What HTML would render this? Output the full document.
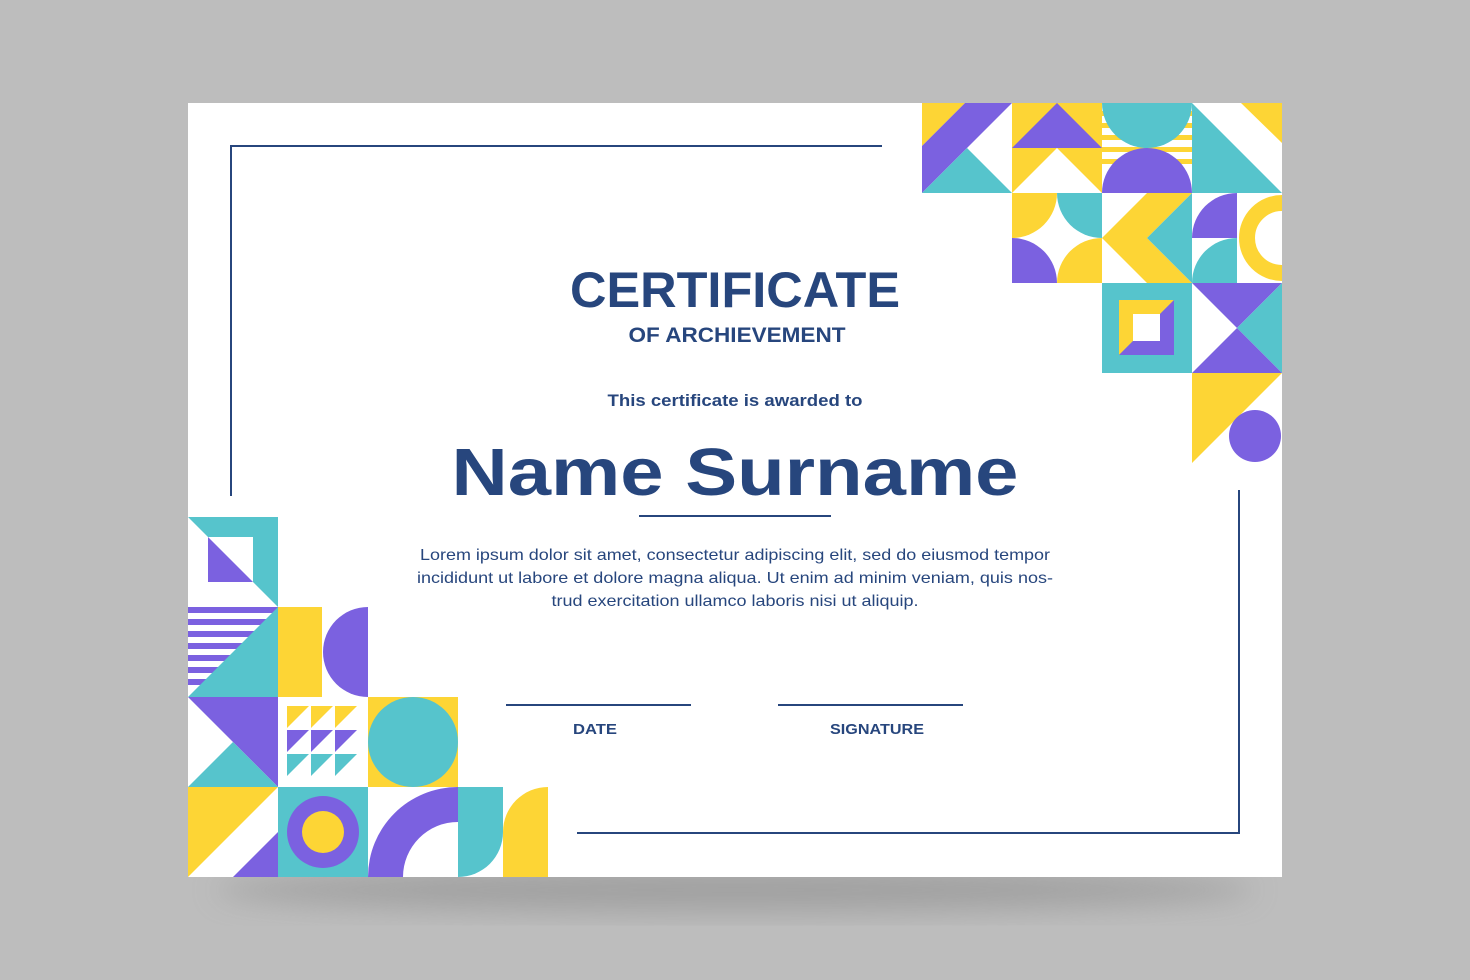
<!DOCTYPE html>
<html><head><meta charset="utf-8"><style>
html,body{margin:0;padding:0;background:#bdbdbd;}
svg{display:block}
text{font-family:"Liberation Sans",sans-serif;fill:#27467d}
</style></head><body>
<svg width="1470" height="980" viewBox="0 0 1470 980" xmlns="http://www.w3.org/2000/svg">
<defs>
<filter id="sh" x="-10%" y="-10%" width="120%" height="140%"><feGaussianBlur stdDeviation="14"/></filter>
<clipPath id="c31"><rect x="270" y="90" width="90" height="90"/></clipPath>
<clipPath id="c23"><rect x="180" y="270" width="90" height="90"/></clipPath>
</defs>
<rect width="1470" height="980" fill="#bdbdbd"/>
<ellipse cx="735" cy="890" rx="520" ry="22" fill="#8a8a8a" opacity="0.55" filter="url(#sh)"/>
<rect x="188" y="103" width="1094" height="774" fill="#fff"/>
<g stroke="#27467d" stroke-width="2" fill="none">
<polyline points="882,146 231,146 231,496"/>
<polyline points="577,833 1239,833 1239,490"/>
<line x1="639" y1="516" x2="831" y2="516"/>
<line x1="506" y1="705" x2="691" y2="705"/>
<line x1="778" y1="705" x2="963" y2="705"/>
</g>
<text x="735" y="307" text-anchor="middle" font-size="50" font-weight="bold" textLength="330" lengthAdjust="spacingAndGlyphs">CERTIFICATE</text>
<text x="737" y="342" text-anchor="middle" font-size="21" font-weight="bold" textLength="217" lengthAdjust="spacingAndGlyphs">OF ARCHIEVEMENT</text>
<text x="735" y="406" text-anchor="middle" font-size="17" font-weight="bold" textLength="255" lengthAdjust="spacingAndGlyphs">This certificate is awarded to</text>
<text x="735" y="495" text-anchor="middle" font-size="67" font-weight="bold" textLength="567" lengthAdjust="spacingAndGlyphs">Name Surname</text>
<g font-size="16">
<text x="735" y="560" text-anchor="middle" textLength="630" lengthAdjust="spacingAndGlyphs">Lorem ipsum dolor sit amet, consectetur adipiscing elit, sed do eiusmod tempor</text>
<text x="735" y="583" text-anchor="middle" textLength="636" lengthAdjust="spacingAndGlyphs">incididunt ut labore et dolore magna aliqua. Ut enim ad minim veniam, quis nos-</text>
<text x="735" y="606" text-anchor="middle" textLength="367" lengthAdjust="spacingAndGlyphs">trud exercitation ullamco laboris nisi ut aliquip.</text>
</g>
<text x="595" y="734" text-anchor="middle" font-size="15" font-weight="bold" textLength="44" lengthAdjust="spacingAndGlyphs">DATE</text>
<text x="877" y="734" text-anchor="middle" font-size="15" font-weight="bold" textLength="94" lengthAdjust="spacingAndGlyphs">SIGNATURE</text>

<!-- top right -->
<g transform="translate(922,103)">
<!-- 0,0 -->
<polygon points="0,0 43,0 0,43" fill="#fdd535"/>
<polygon points="43,0 90,0 45,45 0,90 0,43" fill="#7b61e0"/>
<polygon points="0,90 90,90 45,45" fill="#56c4cc"/>
<!-- 1,0 -->
<rect x="90" y="0" width="90" height="90" fill="#fdd535"/>
<polygon points="90,45 135,0 180,45" fill="#7b61e0"/>
<polygon points="90,90 135,45 180,90" fill="#fff"/>
<!-- 2,0 -->
<g fill="#fdd535"><rect x="180" y="8" width="90" height="5"/><rect x="180" y="20" width="90" height="5"/><rect x="180" y="32" width="90" height="5"/><rect x="180" y="44" width="90" height="5"/><rect x="180" y="56" width="90" height="5"/></g>
<path d="M180,0 A45,45 0 0 0 270,0 Z" fill="#56c4cc"/>
<path d="M180,90 A45,45 0 0 1 270,90 Z" fill="#7b61e0"/>
<!-- 3,0 -->
<polygon points="270,0 270,90 360,90" fill="#56c4cc"/>
<polygon points="319,0 360,0 360,40" fill="#fdd535"/>
<!-- 1,1 -->
<path d="M90,90 h45 A45,45 0 0 1 90,135 Z" fill="#fdd535"/>
<path d="M180,90 v45 A45,45 0 0 1 135,90 Z" fill="#56c4cc"/>
<path d="M90,180 v-45 A45,45 0 0 1 135,180 Z" fill="#7b61e0"/>
<path d="M180,180 h-45 A45,45 0 0 1 180,135 Z" fill="#fdd535"/>
<!-- 2,1 -->
<polygon points="180,135 225,90 270,90 225,135 270,180 225,180" fill="#fdd535"/>
<polygon points="270,90 225,135 270,180" fill="#56c4cc"/>
<!-- 3,1 -->
<path d="M270,135 A45,45 0 0 1 315,90 V135 Z" fill="#7b61e0"/>
<path d="M270,180 A45,45 0 0 1 315,135 V180 Z" fill="#56c4cc"/>
<circle cx="360" cy="135" r="35" fill="none" stroke="#fdd535" stroke-width="16" clip-path="url(#c31)"/>
<!-- 2,2 -->
<rect x="180" y="180" width="90" height="90" fill="#56c4cc"/>
<polygon points="197,197 252,197 197,252" fill="#fdd535"/>
<polygon points="252,197 252,252 197,252" fill="#7b61e0"/>
<rect x="211" y="211" width="27" height="27" fill="#fff"/>
<!-- 3,2 -->
<polygon points="270,180 360,180 315,225" fill="#7b61e0"/>
<polygon points="360,180 315,225 360,270" fill="#56c4cc"/>
<polygon points="270,270 315,225 360,270" fill="#7b61e0"/>
<!-- 3,3 -->
<polygon points="270,270 360,270 270,360" fill="#fdd535"/>
<circle cx="333" cy="333" r="26" fill="#7b61e0"/>
</g>

<!-- bottom left -->
<g transform="translate(188,517)">
<polygon points="0,0 90,0 90,90" fill="#56c4cc"/>
<rect x="20" y="20" width="45" height="45" fill="#fff"/>
<polygon points="20,20 20,65 65,65" fill="#7b61e0"/>
<g fill="#7b61e0"><rect x="0" y="90" width="90" height="6"/><rect x="0" y="102" width="90" height="6"/><rect x="0" y="114" width="90" height="6"/><rect x="0" y="126" width="90" height="6"/><rect x="0" y="138" width="90" height="6"/><rect x="0" y="150" width="90" height="6"/><rect x="0" y="162" width="90" height="6"/></g>
<polygon points="0,180 90,90 90,180" fill="#56c4cc"/>
<rect x="90" y="90" width="44" height="90" fill="#fdd535"/>
<path d="M180,90 A45,45 0 0 0 180,180 Z" fill="#7b61e0"/>
<!-- row2 -->
<polygon points="0,180 90,180 90,270" fill="#7b61e0"/>
<polygon points="0,270 45,225 90,270" fill="#56c4cc"/>
<g fill="#fdd535"><polygon points="99,189 121,189 99,211"/><polygon points="123,189 145,189 123,211"/><polygon points="147,189 169,189 147,211"/></g>
<g fill="#7b61e0"><polygon points="99,213 121,213 99,235"/><polygon points="123,213 145,213 123,235"/><polygon points="147,213 169,213 147,235"/></g>
<g fill="#56c4cc"><polygon points="99,237 121,237 99,259"/><polygon points="123,237 145,237 123,259"/><polygon points="147,237 169,237 147,259"/></g>
<rect x="180" y="180" width="90" height="90" fill="#fdd535"/>
<circle cx="225" cy="225" r="45" fill="#56c4cc"/>
<!-- row3 -->
<polygon points="0,270 90,270 0,360" fill="#fdd535"/>
<polygon points="45,360 90,315 90,360" fill="#7b61e0"/>
<rect x="90" y="270" width="90" height="90" fill="#56c4cc"/>
<circle cx="135" cy="315" r="36" fill="#7b61e0"/>
<circle cx="135" cy="315" r="21" fill="#fdd535"/>
<path d="M180,360 A90,90 0 0 1 270,270 V305 A55,55 0 0 0 215,360 Z" fill="#7b61e0"/>
<path d="M270,270 H315 V315 A45,45 0 0 1 270,360 Z" fill="#56c4cc"/>
<path d="M315,360 V315 A45,45 0 0 1 360,270 V360 Z" fill="#fdd535"/>
</g>
</svg>
</body></html>
